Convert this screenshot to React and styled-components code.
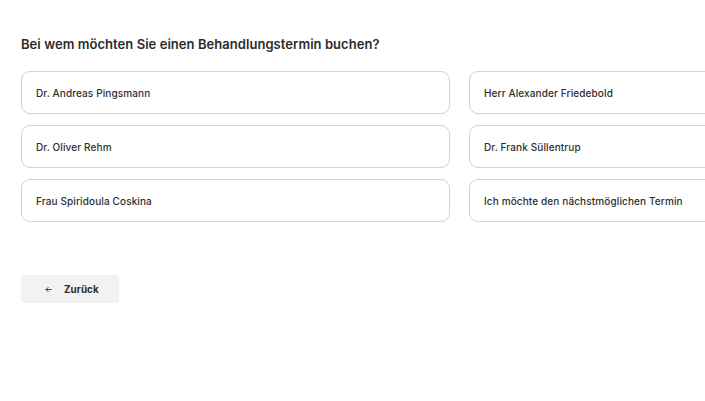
import React from 'react'
import styled, { createGlobalStyle } from 'styled-components'

const GlobalStyle = createGlobalStyle`
  html, body {
    margin: 0;
    padding: 0;
    background: #fff;
    overflow: hidden;
  }
  body {
    font-family: Inter, "Open Sans", sans-serif;
    color: #2b2b2b;
  }
`

const Page = styled.div`
  width: 877px;
  padding: 36px 0 0 21px;
`

const Title = styled.h1`
  margin: 0 0 19px;
  font-size: 13px;
  font-weight: 600;
  line-height: 16px;
  color: #2b2b2b;
  letter-spacing: 0.05px;
`

const OptionGrid = styled.div`
  display: grid;
  grid-template-columns: 429px 429px;
  column-gap: 19px;
  row-gap: 11px;
`

const Option = styled.button`
  display: flex;
  align-items: center;
  height: 43px;
  padding: 0 14px;
  border: 1px solid #d2d2d2;
  border-radius: 9px;
  background: #fff;
  font-family: inherit;
  font-size: 10px;
  font-weight: 500;
  letter-spacing: 0.12px;
  color: #2e2e2e;
  text-align: left;
  cursor: pointer;
`

const Footer = styled.div`
  margin-top: 53px;
`

const BackButton = styled.button`
  display: flex;
  align-items: center;
  gap: 12px;
  width: 98px;
  height: 28px;
  padding: 0 0 0 24px;
  border: none;
  border-radius: 4px;
  background: #f2f2f2;
  font-family: inherit;
  font-size: 9.8px;
  font-weight: 700;
  letter-spacing: 0.1px;
  color: #2b2b2b;
  cursor: pointer;
`

const doctors = [
  'Dr. Andreas Pingsmann',
  'Herr Alexander Friedebold',
  'Dr. Oliver Rehm',
  'Dr. Frank Süllentrup',
  'Frau Spiridoula Coskina',
  'Ich möchte den nächstmöglichen Termin',
]

function ArrowLeft() {
  return (
    <svg width="7" height="7" viewBox="0 0 10 10" fill="none" stroke="#333" strokeWidth="1.3" strokeLinecap="round" strokeLinejoin="round">
      <path d="M9 5H1.5M4.5 2L1.5 5l3 3" />
    </svg>
  )
}

function App() {
  return (
    <>
      <GlobalStyle />
      <Page>
        <Title>Bei wem möchten Sie einen Behandlungstermin buchen?</Title>
        <OptionGrid>
          {doctors.map((name) => (
            <Option key={name}>{name}</Option>
          ))}
        </OptionGrid>
        <Footer>
          <BackButton>
            <ArrowLeft />
            Zurück
          </BackButton>
        </Footer>
      </Page>
    </>
  )
}

export default App
